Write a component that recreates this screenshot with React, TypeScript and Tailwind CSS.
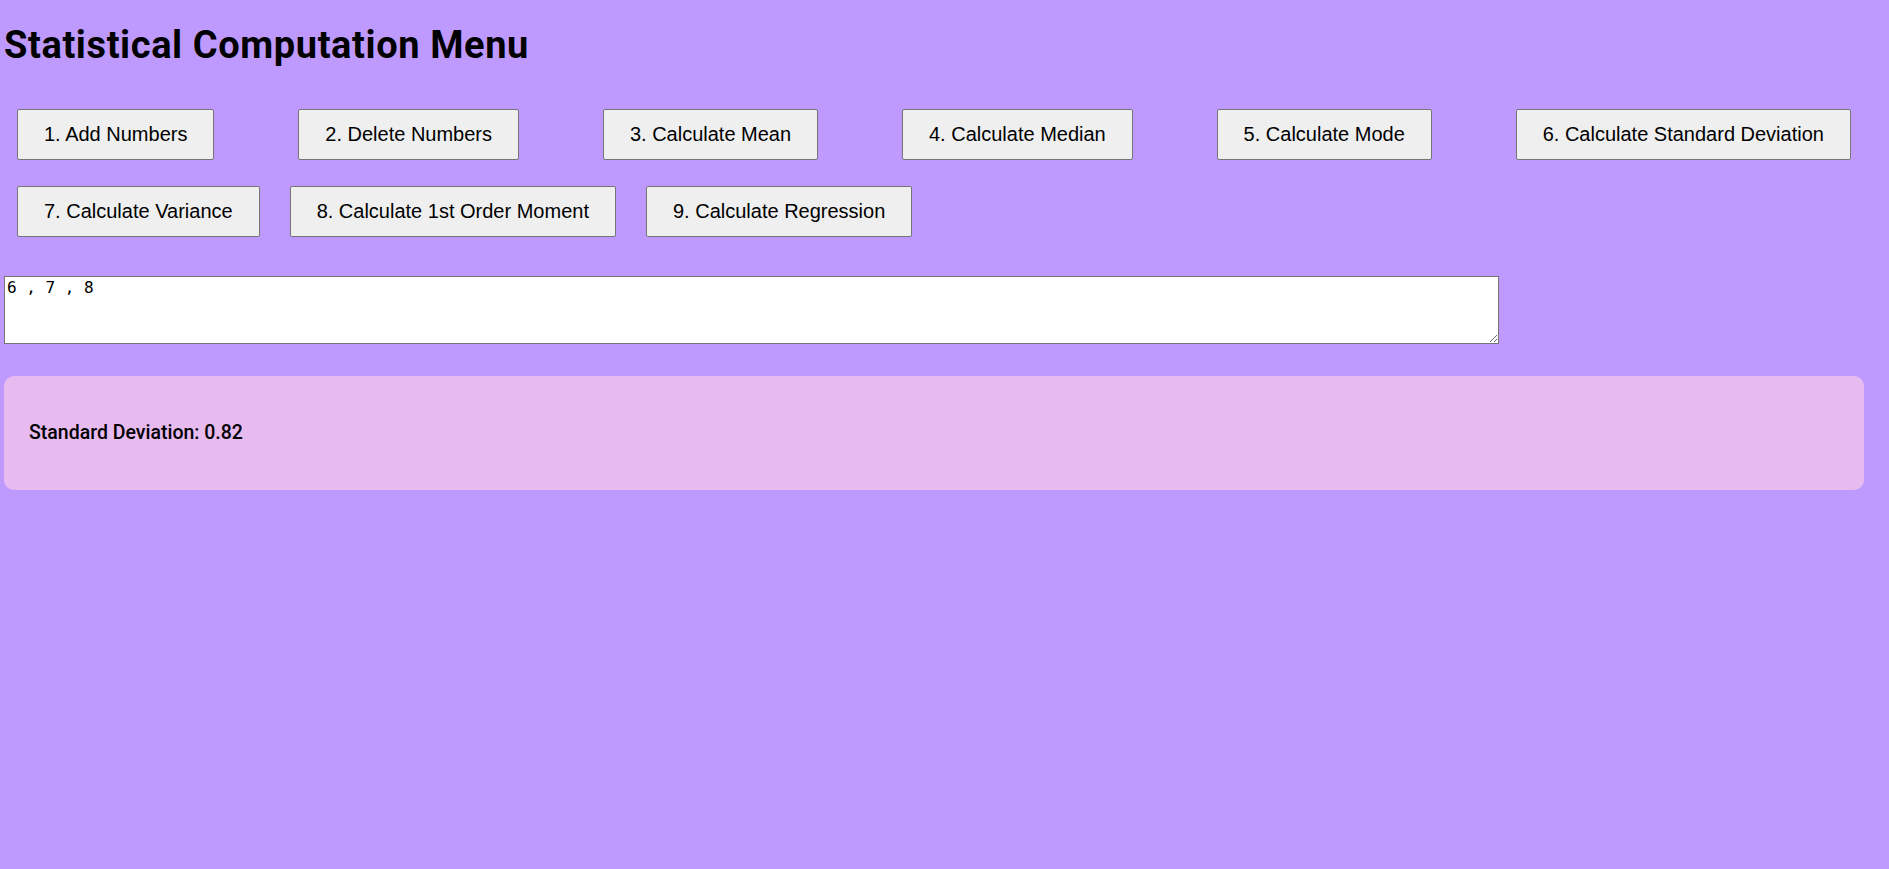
import React from 'react'

const row1 = [
    '1. Add Numbers',
    '2. Delete Numbers',
    '3. Calculate Mean',
    '4. Calculate Median',
    '5. Calculate Mode',
    '6. Calculate Standard Deviation',
]

const row2 = ['7. Calculate Variance', '8. Calculate 1st Order Moment', '9. Calculate Regression']

const MenuButton = ({ label }: { label: string }) => {
    return (
        <button
            type="button"
            className="h-[51px] px-[26px] bg-[#efefef] border border-[#767676] rounded-[2px] text-[20px] leading-[23px] text-black whitespace-nowrap font-['Liberation_Sans',Arial,sans-serif]"
        >
            {label}
        </button>
    )
}

export default function App() {
    return (
        <div className="min-h-[869px] w-full bg-[#be9aff] px-[4px] pt-[23px] text-black">
            {/* Heading */}
            <h1 className="text-[38px] leading-[44px] font-bold tracking-[0.6px] font-['Roboto','Noto_Sans',sans-serif]">
                Statistical Computation Menu
            </h1>

            {/* Menu buttons */}
            <div className="mt-[42px] flex justify-between px-[13px] w-[1860px]">
                {row1.map((label) => (
                    <MenuButton key={label} label={label} />
                ))}
            </div>
            <div className="mt-[26px] flex gap-[30px] pl-[13px]">
                {row2.map((label) => (
                    <MenuButton key={label} label={label} />
                ))}
            </div>

            {/* Input */}
            <textarea
                defaultValue="6 , 7 , 8"
                className="block mt-[39px] w-[1495px] h-[68px] bg-white border border-[#767676] px-[2px] py-[1px] text-[16px] leading-[20px] text-black font-['DejaVu_Sans_Mono','Liberation_Mono',monospace] resize"
            />

            {/* Result */}
            <div className="mt-[32px] w-[1860px] h-[114px] rounded-[10px] bg-[#e7baf0] flex items-center px-[25px]">
                <p className="text-[19.5px] font-medium font-['Roboto','Noto_Sans',sans-serif]">
                    Standard Deviation: 0.82
                </p>
            </div>
        </div>
    )
}
